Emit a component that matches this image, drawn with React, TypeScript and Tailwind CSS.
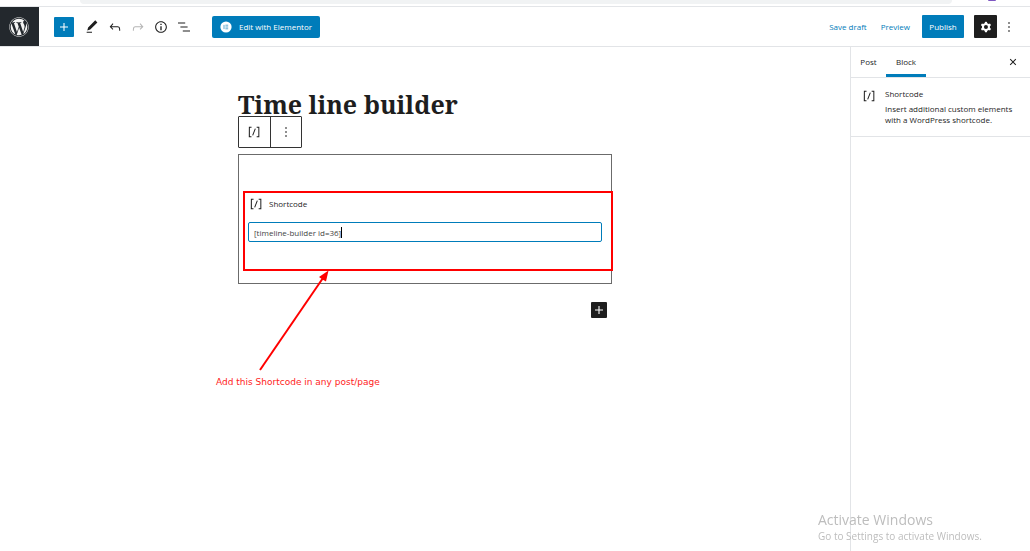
import { useState } from "react";
import type { ReactNode } from "react";
import { FaWordpress } from "react-icons/fa";

const paths = {
  plus: "M18 11.2h-5.2V6h-1.6v5.2H6v1.6h5.2V18h1.6v-5.2H18z",
  edit: "M20.1 5.1L16.9 2 6.2 12.7l-1.3 4.4 4.5-1.3L20.1 5.1zM4 20.8h8v-1.5H4v1.5z",
  undo: "M18.3 11.7c-.6-.6-1.4-.9-2.3-.9H6.7l2.9-3.3-1.1-1-4.5 5L8.5 16l1-1-2.7-2.7H16c.5 0 .9.2 1.3.5 1 1 1 3.4 1 4.5v.3h1.5v-.2c0-1.5 0-4.3-1.5-5.7z",
  redo: "M15.6 6.5l-1.1 1 2.9 3.3H8c-.9 0-1.7.3-2.3.9-1.4 1.5-1.4 4.2-1.4 5.6v.2h1.5v-.3c0-1.1 0-3.5 1-4.5.3-.3.7-.5 1.3-.5h9.2L14.5 15l1.1 1.1 4.6-4.6-4.6-5z",
  info: "M12 3.2c-4.8 0-8.8 3.9-8.8 8.8 0 4.8 3.9 8.8 8.8 8.8 4.8 0 8.8-3.9 8.8-8.8 0-4.8-4-8.8-8.8-8.8zm0 16c-4 0-7.2-3.3-7.2-7.2C4.8 8 8 4.8 12 4.8s7.2 3.3 7.2 7.2c0 4-3.2 7.2-7.2 7.2zM11 17h2v-6h-2v6zm0-8h2V7h-2v2z",
  list: "M13.8 5.2H3v1.5h10.8V5.2zm-3.6 12v1.5H21v-1.5H10.2zm7.2-6H6.6v1.5h10.8v-1.5z",
  shortcode: "M16 4.2v1.5h2.5v12.5H16v1.5h4V4.2h-4zM4.2 19.8h4v-1.5H5.8V5.8h2.5V4.2h-4l-.1 15.6zm5.1-3.1l1.4.6 4-10-1.4-.6-4 10z",
  more: "M13 19h-2v-2h2v2zm0-6h-2v-2h2v2zm0-6h-2V5h2v2z",
  close: "M12 13.06l3.712 3.713 1.061-1.06L13.061 12l3.712-3.712-1.06-1.06L12 10.938 8.288 7.227l-1.061 1.06L10.939 12l-3.712 3.712 1.06 1.061L12 13.061z",
  cog: "M10.289 4.836A1 1 0 0111.275 4h1.306a1 1 0 01.987.836l.244 1.466c.787.26 1.503.679 2.108 1.218l1.393-.522a1 1 0 011.216.437l.653 1.13a1 1 0 01-.23 1.273l-1.148.944a6.025 6.025 0 010 2.435l1.149.946a1 1 0 01.23 1.272l-.653 1.13a1 1 0 01-1.216.437l-1.394-.522c-.605.54-1.32.958-2.108 1.218l-.244 1.466a1 1 0 01-.987.836h-1.306a1 1 0 01-.986-.836l-.244-1.466a5.995 5.995 0 01-2.108-1.218l-1.394.522a1 1 0 01-1.217-.436l-.653-1.131a1 1 0 01.23-1.272l1.149-.946a6.026 6.026 0 010-2.435l-1.148-.944a1 1 0 01-.23-1.272l.653-1.131a1 1 0 011.217-.437l1.393.522a5.994 5.994 0 012.108-1.218l.244-1.466zM14.929 12a3 3 0 11-6 0 3 3 0 016 0z",
};

function Icon({ name, className = "size-4" }: { name: keyof typeof paths; className?: string }) {
  return (
    <svg viewBox="0 0 24 24" className={className} fill="currentColor" fillRule="evenodd" aria-hidden="true">
      <path d={paths[name]} />
    </svg>
  );
}

function ToolButton({ label, children, disabled }: { label: string; children: ReactNode; disabled?: boolean }) {
  return (
    <button type="button" aria-label={label} disabled={disabled} className="flex h-5 w-[23px] items-center justify-center disabled:text-[#b5b5b5]">
      {children}
    </button>
  );
}

function BrowserEdge() {
  return (
    <div className="flex h-[7px] items-start justify-between overflow-hidden border-b border-[#e3e5e8] pr-[34px] pl-20">
      <div className="mr-9 h-1 grow rounded-b-full bg-[#f1f3f4]" />
      <div className="h-px w-2 rounded-b-full bg-[#7e57c2]" />
    </div>
  );
}

function Header() {
  return (
    <header className="flex h-10 items-center border-b border-[#e2e4e7]">
      <a href="#posts" aria-label="View posts" className="flex h-full w-[39px] items-center justify-center bg-[#23282d] pr-px text-[#f3f3f3]">
        <FaWordpress className="size-5" />
      </a>
      <button type="button" aria-label="Add block" className="mr-[6px] ml-[15px] flex size-5 items-center justify-center rounded-[1px] bg-[#007cba] text-white">
        <Icon name="plus" />
      </button>
      <div className="flex">
        <ToolButton label="Tools"><Icon name="edit" /></ToolButton>
        <ToolButton label="Undo"><Icon name="undo" /></ToolButton>
        <ToolButton label="Redo" disabled><Icon name="redo" /></ToolButton>
        <ToolButton label="Details"><Icon name="info" /></ToolButton>
        <ToolButton label="List view"><Icon name="list" /></ToolButton>
      </div>
      <button type="button" className="ml-[17px] flex h-[22px] items-center gap-[7px] rounded-xs bg-[#007cba] px-2 text-[8px] text-white">
        <svg viewBox="0 0 12 12" className="size-3" aria-hidden="true">
          <circle cx="6" cy="6" r="5.6" fill="#fff" />
          <path d="M4 3.9v4.2M5.4 4.2h2.8M5.4 6h2.8M5.4 7.8h2.8" stroke="#4a9fcb" strokeWidth=".9" />
        </svg>
        Edit with Elementor
      </button>
      <div className="ml-auto flex items-center pr-[13px] text-[8px] text-[#007cba]">
        <button type="button">Save draft</button>
        <button type="button" className="ml-[14px]">Preview</button>
        <button type="button" className="ml-3 h-[23px] w-[42px] rounded-[1px] bg-[#007cba] text-white">Publish</button>
        <button type="button" aria-label="Settings" className="ml-[10px] flex size-[23px] items-center justify-center rounded-[1px] bg-[#1e1e1e] text-white">
          <Icon name="cog" />
        </button>
        <button type="button" aria-label="Options" className="ml-1 text-[#1e1e1e]"><Icon name="more" /></button>
      </div>
    </header>
  );
}

function ShortcodeBlock() {
  const [value, setValue] = useState("[timeline-builder id=36]");
  return (
    <section className="relative h-[130px] border border-[#6b6b6b] px-[9px] pt-[41px]">
      <label htmlFor="shortcode" className="flex h-4 items-center gap-[5px] text-[8px] font-medium">
        <Icon name="shortcode" />
        Shortcode
      </label>
      <div className="mt-[10px] flex h-5 items-center rounded-xs border border-[#007cba] px-[5px] pt-px text-[8px] text-[#444]">
        <input id="shortcode" value={value} onChange={(e) => setValue(e.target.value)} className="field-sizing-content outline-none" />
        <span className="h-[11px] w-px bg-black" aria-hidden="true" />
      </div>
      <div className="pointer-events-none absolute top-9 -right-[2px] left-1 h-20 border-2 border-[#ff0000]" />
      <svg viewBox="0 0 72 104" className="pointer-events-none absolute top-[114px] left-[19px] h-[104px] w-[72px]" aria-hidden="true">
        <path d="M2 101L65 9" stroke="#ff0000" strokeWidth="2" />
        <path d="M70.5 1.5L68 12.5L64.5 10.5L61 8Z" fill="#ff0000" />
      </svg>
      <p className="absolute top-[221px] -left-[23px] font-['DejaVu_Sans',sans-serif] text-[9px] leading-3 whitespace-nowrap text-[#ff2222]">
        Add this Shortcode in any post/page
      </p>
    </section>
  );
}

function Editor() {
  return (
    <main className="min-w-0 grow">
      <div className="mx-auto max-w-[374px] pt-[41px]">
        <h1 className="h-7 font-['Noto_Serif','DejaVu_Serif_Condensed','DejaVu_Serif',serif] text-[25px] leading-8 font-bold whitespace-nowrap">
          Time line builder
        </h1>
        <div role="toolbar" aria-label="Block tools" className="flex h-8 w-16 divide-x divide-[#333] rounded-[1px] border border-[#333]">
          <button type="button" aria-label="Shortcode" className="flex flex-1 items-center justify-center"><Icon name="shortcode" /></button>
          <button type="button" aria-label="Options" className="flex flex-1 items-center justify-center"><Icon name="more" /></button>
        </div>
        <div className="mt-[6px]">
          <ShortcodeBlock />
        </div>
        <div className="mt-[18px] flex justify-end pr-[5px]">
          <button type="button" aria-label="Add block" className="flex size-4 items-center justify-center rounded-[1px] bg-[#1e1e1e] text-white">
            <Icon name="plus" />
          </button>
        </div>
      </div>
    </main>
  );
}

function Sidebar() {
  return (
    <aside className="w-[180px] shrink-0 border-l border-[#e2e4e7]">
      <div className="flex h-[31px] items-stretch border-b border-[#e2e4e7] pr-[9px] text-[8px] font-medium">
        <button type="button" className="w-[35px]">Post</button>
        <button type="button" className="w-10 border-b-3 border-[#007cba] pt-[3px]">Block</button>
        <button type="button" aria-label="Close settings" className="ml-auto"><Icon name="close" /></button>
      </div>
      <div className="flex gap-2 border-b border-[#e2e4e7] pt-[10px] pr-2 pb-[11px] pl-[10px]">
        <Icon name="shortcode" className="size-4 shrink-0" />
        <div className="text-[8px]">
          <h2 className="leading-3 font-medium">Shortcode</h2>
          <p className="mt-[3px] leading-[11px]">Insert additional custom elements with a WordPress shortcode.</p>
        </div>
      </div>
    </aside>
  );
}

export default function App() {
  return (
    <div className="flex min-h-screen flex-col bg-white font-['Open_Sans','Noto_Sans',sans-serif] text-[#1e1e1e]">
      <BrowserEdge />
      <Header />
      <div className="flex grow">
        <Editor />
        <Sidebar />
      </div>
      <div className="pointer-events-none fixed right-[43px] bottom-2 w-[169px] whitespace-nowrap text-[#bdbdbd]">
        <p className="text-[14px] leading-[18px]">Activate Windows</p>
        <p className="text-[10px] leading-[14px]">Go to Settings to activate Windows.</p>
      </div>
    </div>
  );
}
